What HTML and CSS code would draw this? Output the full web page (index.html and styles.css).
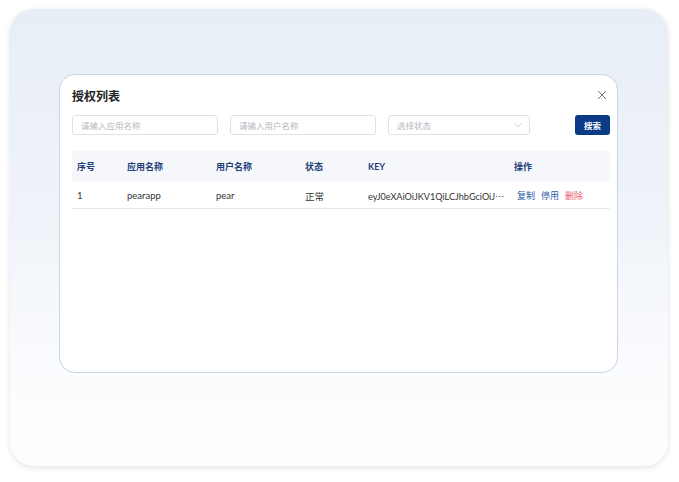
FILE: index.html
```html
<!DOCTYPE html>
<html lang="zh">
<head>
<meta charset="utf-8">
<link rel="stylesheet" href="styles.css">
</head>
<body>
<div class="card">
  <div class="dialog">
    <div class="dlg-head">
      <span class="title">授权列表</span>
      <svg class="close" width="10" height="10" viewBox="0 0 10 10"><path d="M1 1L9 9M9 1L1 9" stroke="#666" stroke-width="0.9" fill="none"/></svg>
    </div>
    <div class="filters">
      <div class="input w1">请输入应用名称</div>
      <div class="input w1">请输入用户名称</div>
      <div class="input w2 select">选择状态
        <svg class="chev" width="8" height="5" viewBox="0 0 8 5"><path d="M0.5 0.5L4 4L7.5 0.5" stroke="#c6cad1" stroke-width="0.9" fill="none"/></svg>
      </div>
      <button class="btn">搜索</button>
    </div>
    <div class="table">
      <div class="tr th">
        <span>序号</span><span>应用名称</span><span>用户名称</span><span>状态</span><span>KEY</span><span>操作</span>
      </div>
      <div class="tr td">
        <span>1</span><span>pearapp</span><span>pear</span><span>正常</span><span class="key">eyJ0eXAiOiJKV1QiLCJhbGciOiJ⋯</span>
        <span class="ops"><a class="op">复制</a><a class="op">停用</a><a class="op del">删除</a></span>
      </div>
    </div>
  </div>
</div>
</body>
</html>
```
FILE: styles.css
```css
html, body { margin: 0; padding: 0; background: #ffffff; }
body {
  font-family: "Lato", "Noto Sans CJK SC", sans-serif;
  padding: 9px 11px 16px 10px;
  width: 679px;
  height: 482px;
  box-sizing: border-box;
}
.card {
  width: 658px;
  height: 457px;
  box-sizing: border-box;
  border-radius: 24px;
  background: linear-gradient(180deg, #e8eef6 0%, #eff3f9 45%, #fbfcfe 80%, #fdfdfe 100%);
  box-shadow: 0 2px 6px rgba(0,0,0,0.10), 0 0 2px rgba(0,0,0,0.05);
  padding: 65px 0 0 49px;
}
.dialog {
  width: 559px;
  height: 299px;
  box-sizing: border-box;
  background: #fff;
  border: 1px solid #c8d5e5;
  border-radius: 16px;
  padding: 0 7px 0 12px;
}
.dlg-head {
  display: flex;
  align-items: center;
  justify-content: space-between;
  height: 40px;
  padding-top: 1px;
  box-sizing: border-box;
}
.title {
  font-family: "Noto Sans CJK SC", sans-serif;
  font-size: 12px;
  font-weight: 600;
  color: #222;
}
.close { margin-right: 3px; margin-top: -2px; }
.filters {
  display: flex;
  align-items: center;
  gap: 12px;
  height: 20px;
}
.input {
  height: 20px;
  box-sizing: border-box;
  border: 1px solid #dfe2e7;
  border-radius: 3px;
  font-family: "Noto Sans CJK SC", sans-serif;
  font-size: 8.5px;
  color: #b3b7be;
  display: flex;
  align-items: center;
  padding-left: 8px;
}
.w1 { width: 146px; }
.w2 { width: 142px; }
.select { justify-content: space-between; padding-right: 7px; }
.btn {
  margin-left: auto;
  width: 35px;
  height: 20px;
  border: none;
  border-radius: 3px;
  background: #0b3b87;
  color: #fff;
  font-family: "Noto Sans CJK SC", sans-serif;
  font-size: 8.5px;
  font-weight: 700;
  padding: 0;
}
.table { margin-top: 16px; }
.tr {
  display: grid;
  grid-template-columns: 50px 89px 89px 63px 146px 1fr;
  align-items: center;
  padding-left: 5px;
  font-size: 9.5px;
}
.th {
  height: 31px;
  background: #f5f7fa;
  color: #1d3d78;
  font-weight: 700;
  font-size: 9px;
  font-family: "Noto Sans CJK SC", sans-serif;
}
.th span:nth-child(5) { font-family: "Lato", sans-serif; font-weight: 700; }
.td {
  height: 27px;
  padding-top: 1px;
  border-bottom: 1px solid #e6e9ee;
  color: #333;
  box-sizing: border-box;
}
.key { white-space: nowrap; font-size: 9.1px; }
.ops { display: flex; gap: 6px; padding-left: 3px; font-family: "Noto Sans CJK SC", sans-serif; }
.op { color: #2b5aa6; font-size: 9px; }
.op.del { color: #ec5b72; }
```
